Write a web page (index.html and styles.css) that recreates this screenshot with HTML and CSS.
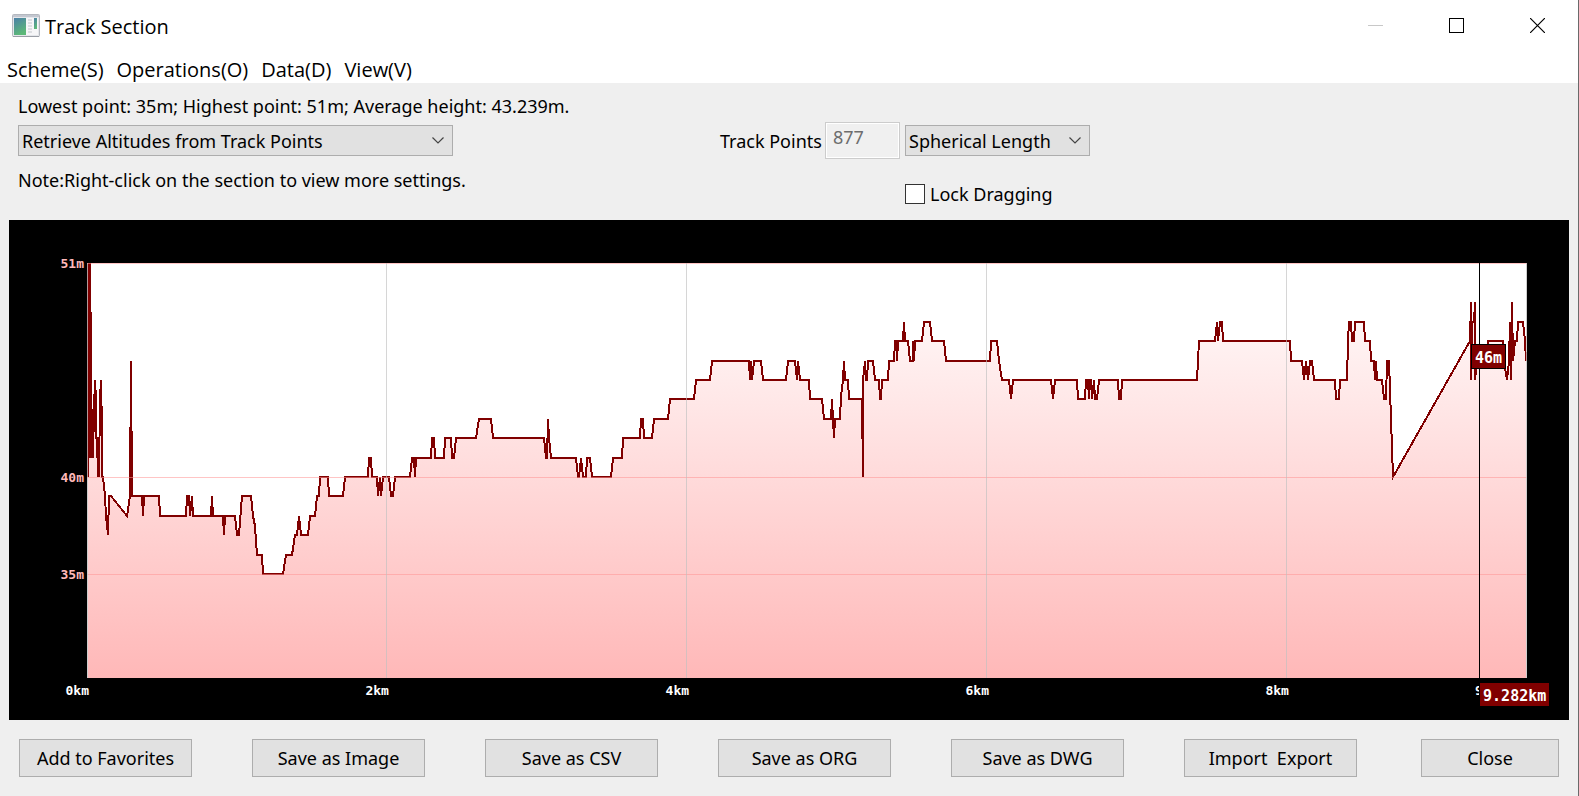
FILE: index.html
```
<!DOCTYPE html>
<html lang="en">
<head>
<meta charset="utf-8">
<title>Track Section</title>
<link rel="stylesheet" href="styles.css">
</head>
<body>
<div class="window">
  <header class="titlebar">
    <svg class="app-icon" width="28" height="24" viewBox="0 0 28 24" aria-hidden="true">
      <defs>
        <linearGradient id="screen" x1="0" y1="0" x2="0.4" y2="1">
          <stop offset="0" stop-color="#4a7fa8"/>
          <stop offset="1" stop-color="#5cb878"/>
        </linearGradient>
      </defs>
      <rect x="0.5" y="0.5" width="27" height="22" rx="1" fill="#e4e6ea" stroke="#b4b8bf"/>
      <rect x="1" y="1" width="26" height="2" fill="#c3c7d0"/>
      <rect x="2" y="4" width="12" height="17" fill="url(#screen)"/>
      <rect x="14" y="4" width="12" height="17" fill="#f6f6f8"/>
      <path d="M16 6h4M16 9h4M16 12h4M16 15h4M16 18h4" stroke="#dcdee2" stroke-width="2"/>
      <rect x="22" y="4" width="3" height="11" fill="url(#screen)"/>
      <path d="M1 22.5h26" stroke="#9a9ea6"/>
    </svg>
    <h1 class="title">Track Section</h1>
    <div class="window-controls">
      <button class="control" type="button" aria-label="Minimize" disabled><svg width="15" height="15" viewBox="0 0 15 15"><path d="M0 7.5h15" stroke="#c8c8c8"/></svg></button>
      <button class="control" type="button" aria-label="Maximize"><svg width="15" height="15" viewBox="0 0 15 15"><rect x="0.5" y="0.5" width="14" height="14" fill="none" stroke="#000"/></svg></button>
      <button class="control" type="button" aria-label="Close window"><svg width="15" height="15" viewBox="0 0 15 15"><path d="M0 0l15 15M15 0L0 15" stroke="#000" stroke-width="1.2"/></svg></button>
    </div>
  </header>
  <nav class="menubar">
    <button class="menu" type="button">Scheme(S)</button>
    <button class="menu" type="button">Operations(O)</button>
    <button class="menu" type="button">Data(D)</button>
    <button class="menu" type="button">View(V)</button>
  </nav>
  <main class="content">
    <section class="settings">
      <div class="source">
        <p class="line">Lowest point: 35m; Highest point: 51m; Average height: 43.239m.</p>
        <div class="combo combo-wide">
          <select class="select" aria-label="Altitude source"><option>Retrieve Altitudes from Track Points</option></select>
          <svg class="chevron" width="12" height="7" viewBox="0 0 12 7"><path d="M0.5 0.5L6 6l5.5-5.5" fill="none" stroke="#444" stroke-width="1.2"/></svg>
        </div>
        <p class="line note">Note:Right-click on the section to view more settings.</p>
      </div>
      <div class="sampling">
        <label class="points-label" for="points">Track Points</label>
        <input class="points" id="points" type="text" value="877" disabled>
        <div class="combo">
          <select class="select" aria-label="Length type"><option>Spherical Length</option></select>
          <svg class="chevron" width="12" height="7" viewBox="0 0 12 7"><path d="M0.5 0.5L6 6l5.5-5.5" fill="none" stroke="#444" stroke-width="1.2"/></svg>
        </div>
        <div class="lock">
          <input class="check" id="lock" type="checkbox">
          <label for="lock">Lock Dragging</label>
        </div>
      </div>
    </section>
    <section class="chart">
      <div class="axis-y">
        <span class="tick" style="top:0%">51m</span>
        <span class="tick" style="top:51.6%">40m</span>
        <span class="tick" style="top:75%">35m</span>
      </div>
      <div class="plot">
        <svg class="plot-svg" viewBox="87 263 1440 415" preserveAspectRatio="none" shape-rendering="crispEdges">
          <defs>
            <linearGradient id="fill" gradientUnits="userSpaceOnUse" x1="0" y1="263" x2="0" y2="678">
              <stop offset="0" stop-color="#ffffff"/>
              <stop offset="1" stop-color="#ffb8b8"/>
            </linearGradient>
          </defs>
          <rect x="87" y="263" width="1440" height="415" fill="#fff"/>
          <path id="area" fill="url(#fill)"/>
          <path id="profile" fill="none" stroke="#800000" stroke-width="2"/>
          <path d="M87 263.5H1527M87 477.5H1527M87 574.5H1527" stroke="#ff9696" stroke-opacity="0.55"/>
          <path d="M386.5 263V678M686.5 263V678M986.5 263V678M1286.5 263V678" stroke="#c0c0c0" stroke-opacity="0.65"/>
          <path d="M87.5 263V678M1526.5 263V678" stroke="#c0c0c0" stroke-opacity="0.8"/>
          <path d="M1479.5 263V678" stroke="#000"/>
        </svg>
        <span class="badge badge-height" style="left:96.11%;top:19.5%">46m</span>
      </div>
      <div class="axis-x">
        <span class="tick" style="left:0%">0km</span>
        <span class="tick" style="left:20.83%">2km</span>
        <span class="tick" style="left:41.67%">4km</span>
        <span class="tick" style="left:62.5%">6km</span>
        <span class="tick" style="left:83.33%">8km</span>
        <span class="tick tick-covered" style="left:96.39%">9</span>
        <span class="badge badge-distance" style="left:96.74%">9.282km</span>
      </div>
    </section>
    <footer class="actions">
      <button class="action" type="button">Add to Favorites</button>
      <button class="action" type="button">Save as Image</button>
      <button class="action" type="button">Save as CSV</button>
      <button class="action" type="button">Save as ORG</button>
      <button class="action" type="button">Save as DWG</button>
      <button class="action" type="button">Import&nbsp; Export</button>
      <button class="action action-close" type="button">Close</button>
    </footer>
  </main>
</div>
<script src="chart.js"></script>
</body>
</html>
```

FILE: styles.css
```
* { box-sizing: border-box; }

body {
  margin: 0;
  background: #fff;
  color: #000;
  font: 18px/24px "Noto Sans", "Open Sans", sans-serif;
}

button, input, select { font: inherit; color: inherit; margin: 0; }

.window {
  display: flex;
  flex-direction: column;
  min-height: 100vh;
  border-right: 1px solid #6a6a6a;
}

.titlebar {
  display: flex;
  align-items: center;
  height: 51px;
  padding-left: 12px;
  font-family: "Open Sans", sans-serif;
}
.app-icon { margin-right: 5px; }
.title { margin: 0; padding-top: 2px; font-size: 20px; font-weight: 400; }
.window-controls { display: flex; align-self: stretch; margin-left: auto; }
.control {
  display: flex;
  align-items: center;
  justify-content: center;
  width: 81px;
  padding: 0;
  border: 0;
  background: none;
}

.menubar {
  display: flex;
  gap: 13px;
  height: 32px;
  padding-left: 7px;
  font-family: "Open Sans", sans-serif;
  font-size: 20px;
}
.menu { padding: 3px 0 0; border: 0; background: none; line-height: 32px; }

.content {
  flex: 1;
  display: flex;
  flex-direction: column;
  background: #efefef;
}

.settings {
  display: grid;
  grid-template-columns: 45% 1fr;
  padding: 11px 0 16px 18px;
}
.line { margin: 0; white-space: nowrap; }
.note { margin-top: 12px; }

.combo { position: relative; width: 185px; height: 31px; }
.combo-wide { width: 435px; margin-top: 7px; }
.select {
  width: 100%;
  height: 100%;
  padding: 0 3px;
  border: 1px solid #adadad;
  border-radius: 0;
  background: #e1e1e1;
  appearance: none;
}
.chevron { position: absolute; right: 9px; top: 12px; pointer-events: none; }

.sampling {
  display: grid;
  grid-template-columns: 101px 76px 1fr;
  grid-template-rows: 37px 20px;
  gap: 25px 4px;
  align-items: center;
  align-content: start;
  padding-top: 28px;
}
.points-label { white-space: nowrap; }
.points {
  width: 75px;
  height: 37px;
  padding: 0 7px 8px;
  border: 1px solid #ccc;
  box-shadow: inset 0 0 0 1px #fff;
  background: #f0f0f0;
  color: #6d6d6d;
}
.lock { grid-column: 3; display: flex; align-items: center; gap: 5px; }
.check {
  width: 20px;
  height: 20px;
  border: 1px solid #333;
  background: #fff;
  appearance: none;
}

.chart {
  flex: 1;
  display: grid;
  grid-template-columns: 78px 1fr 42px;
  grid-template-rows: 43px 1fr 42px;
  margin: 0 9px;
  background: #000;
  color: #fff;
  font: bold 13px/16px "DejaVu Sans Mono", monospace;
}
.axis-y { grid-area: 2 / 1; position: relative; color: #ffb9b9; }
.axis-y .tick { position: absolute; right: 3px; margin-top: -7px; }
.axis-x { grid-area: 3 / 2; position: relative; }
.axis-x .tick { position: absolute; top: 5px; width: 60px; margin-left: -58px; text-align: right; }
.axis-x .tick-covered { width: 4px; margin-left: 0; overflow: hidden; text-align: left; }
.plot { grid-area: 2 / 2; position: relative; min-height: 200px; }
.plot-svg { position: absolute; width: 100%; height: 100%; overflow: visible; }
.badge {
  position: absolute;
  padding: 4px 3px 0;
  background: #800000;
  font-size: 15px;
  line-height: 19px;
}
.badge-height { border: 1px solid #000; }
.badge-distance { top: 5px; }

.actions {
  display: grid;
  grid-template-columns: repeat(6, 173fr) 142fr;
  gap: 60px;
  padding: 19px;
}
.action {
  height: 38px;
  padding: 0;
  border: 1px solid #adadad;
  background: #e1e1e1;
  white-space: nowrap;
}
.action-close { margin-left: 4px; }
```

FILE: chart.js
```
// Pairs of plot position and altitude in metres.
const points = [
  88,40, 88,51, 90,51, 90,41, 91,48.5, 91,41, 92,43.5, 93,41, 94,43.5, 95,45, 96,44, 96,42, 97,42,
  98,40, 99,42, 99,40, 100,44, 101,45, 102,42.5, 102,40, 103,40, 105,39, 106,38, 108,37, 109,39, 111,39,
  127,38, 130,39, 131,46, 132,39, 142,39, 143,38, 144,39, 159,39, 160,38, 186,38, 187,39, 189,39,
  190,38, 192,39, 193,38, 211,38, 212,39, 213,38, 223,38, 224,37, 225,38, 235,38, 237,37, 239,37,
  242,39, 251,39, 253,38, 255,37.5, 257,36, 262,36, 263,35, 283,35, 286,36, 292,36, 295,37, 297,37, 299,38,
  301,37, 308,37, 310,38, 315,38, 317,39, 319,39, 320,40, 328,40, 329,39, 343,39, 345,40, 368,40,
  369,41, 371,41, 372,40, 377,40, 378,39, 380,40, 381,39, 383,40, 389,40, 391,39, 393,39, 395,40,
  410,40, 412,41, 414,41, 415,40, 416,41, 431,41, 432,42, 434,42, 435,41, 444,41, 445,42, 451,42,
  452,41, 454,41, 456,42, 476,42, 479,43, 491,43, 493,42, 544,42, 546,41, 547,41, 548,43, 549,42,
  551,41, 576,41, 578,40, 579,40, 581,41, 583,40, 586,40, 587,41, 590,41, 592,40, 611,40, 613,41,
  622,41, 623,42, 640,42, 641,43, 643,43, 644,42, 652,42, 654,43, 668,43, 670,44, 694,44, 696,45,
  710,45, 712,46, 749,46, 750,45, 751,46, 752,45, 754,46, 761,46, 763,45, 786,45, 788,46, 795,46,
  797,45, 798,46, 800,45, 809,45, 810,44, 822,44, 824,43, 831,43, 832,44, 833,43, 834,42, 835,43,
  840,43, 841,44.2, 843,45, 844,46, 845,45, 848,45, 849,44, 862,44, 863,40, 863,45, 865,46, 866,45,
  867,45, 868,46, 873,46, 875,45, 879,45, 880,44, 881,44, 882,45, 888,45, 889,46, 894,46, 895,47,
  896,47, 897,46, 898,47, 903,47, 904,48, 905,47, 908,47, 910,46, 913,46, 913,47, 914,46,
  915,47, 922,47, 924,48, 930,48, 932,47, 944,47, 946,46, 990,46, 991,47, 997,47, 999,46, 1002,45,
  1009,45, 1011,44, 1013,45, 1051,45, 1053,44, 1055,45, 1077,45, 1078,44, 1085,44, 1086,45, 1088,45,
  1089,44, 1090,45, 1091,45, 1092,44, 1094,45, 1095,44, 1097,44, 1099,45, 1118,45, 1119,44, 1121,44,
  1122,45, 1197,45, 1199,47, 1215,47, 1217,48, 1218,47, 1220,48, 1222,48, 1223,47, 1290,47, 1291,46,
  1302,46, 1304,45, 1306,46, 1308,45, 1310,46, 1312,46, 1314,45, 1335,45, 1336,44, 1339,44, 1340,45,
  1347,45, 1348,47, 1349,48, 1351,48, 1352,47, 1354,47, 1355,48, 1364,48, 1365,47, 1370,47, 1371,46,
  1374,46, 1375,45, 1376,46, 1377,45, 1382,45, 1384,44, 1386,44, 1387,46, 1389,46, 1391,43, 1393,40,
  1470,47, 1471,49, 1471,45, 1472,48, 1474,48, 1475,49, 1475,45, 1477,46, 1486,46, 1488,47, 1503,47,
  1504,46, 1507,45, 1509,46, 1510,48, 1511,45, 1512,49, 1513,46, 1515,47, 1517,47, 1518,48, 1523,48,
  1525,47, 1526,46
];

const pairs = [];
for (let i = 0; i < points.length; i += 2) {
  pairs.push(points[i] + " " + Math.round(477 - (points[i + 1] - 40) * 19.4));
}
const line = pairs.join("L");
document.getElementById("profile").setAttribute("d", "M" + line);
document.getElementById("area").setAttribute("d", "M88 678L" + line + "L1526 678Z");
```
